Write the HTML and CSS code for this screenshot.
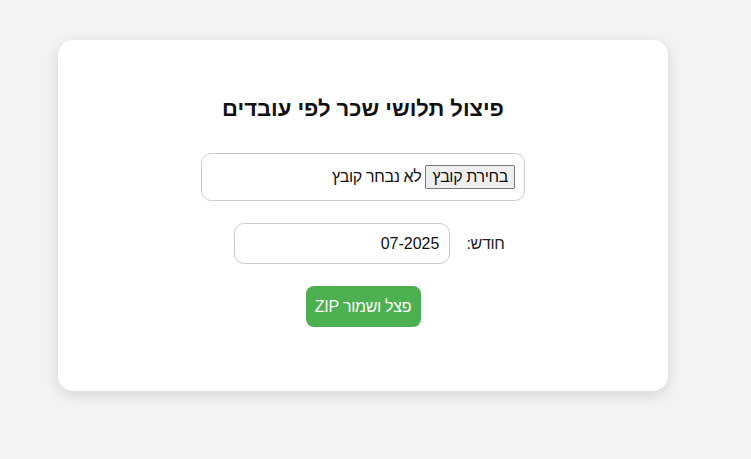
FILE: index.html
```html
<!DOCTYPE html>
<html lang="he" dir="rtl">
<head>
    <meta charset="UTF-8">
    <meta name="viewport" content="width=device-width, initial-scale=1.0">
    <title>פיצול תלושי שכר</title>
    <link rel="stylesheet" href="styles.css">
</head>
<body>
    <div class="container">
        <h2>פיצול תלושי שכר לפי עובדים</h2>
        <div class="form-group">
            <label class="file-box">
                <span class="file-btn">בחירת קובץ</span>
                <span class="file-name">לא נבחר קובץ</span>
            </label>
        </div>
        <div class="form-group month-row">
            <label for="month">חודש:</label>
            <input type="text" id="month" value="07-2025">
        </div>
        <button id="splitBtn">פצל ושמור ZIP</button>
    </div>
</body>
</html>
```

FILE: styles.css
```css
body {
    font-family: "Liberation Sans", Arial, sans-serif;
    background: #f3f3f3;
    margin: 0;
    padding: 40px 83px 40px 58px;
}

.container {
    background: #fff;
    width: 610px;
    box-sizing: border-box;
    padding: 55px 40px 64px;
    border-radius: 15px;
    box-shadow: 0 4px 14px rgba(0, 0, 0, 0.12);
    display: flex;
    flex-direction: column;
    align-items: center;
}

h2 {
    font-size: 22px;
    line-height: 28px;
    margin: 0 0 30px;
    color: #111;
}

.form-group {
    margin-bottom: 22px;
}

.file-box {
    display: flex;
    align-items: center;
    gap: 4px;
    width: 324px;
    height: 48px;
    box-sizing: border-box;
    padding: 10px;
    border: 1px solid #ccc;
    border-radius: 10px;
    font-size: 16px;
    letter-spacing: -0.35px;
    color: #111;
}

.file-btn {
    background: #efefef;
    border: 1px solid #767676;
    border-radius: 2px;
    padding: 2px 6px;
    line-height: 18px;
    margin-right: -1px;
}

.month-row {
    display: flex;
    align-items: center;
    gap: 16px;
    padding-left: 13px;
}

.month-row label {
    font-size: 16px;
    letter-spacing: -0.3px;
    color: #222;
}

.month-row input {
    width: 216px;
    height: 41px;
    box-sizing: border-box;
    padding: 10px;
    border: 1px solid #ccc;
    border-radius: 10px;
    font-family: inherit;
    font-size: 16px;
    color: #111;
    direction: rtl;
}

button {
    background: #4CAF50;
    color: #fff;
    border: none;
    border-radius: 8px;
    height: 41px;
    width: 115px;
    font-family: inherit;
    font-size: 16px;
    letter-spacing: -0.3px;
    cursor: pointer;
}

button:hover {
    background: #45a049;
}
```
